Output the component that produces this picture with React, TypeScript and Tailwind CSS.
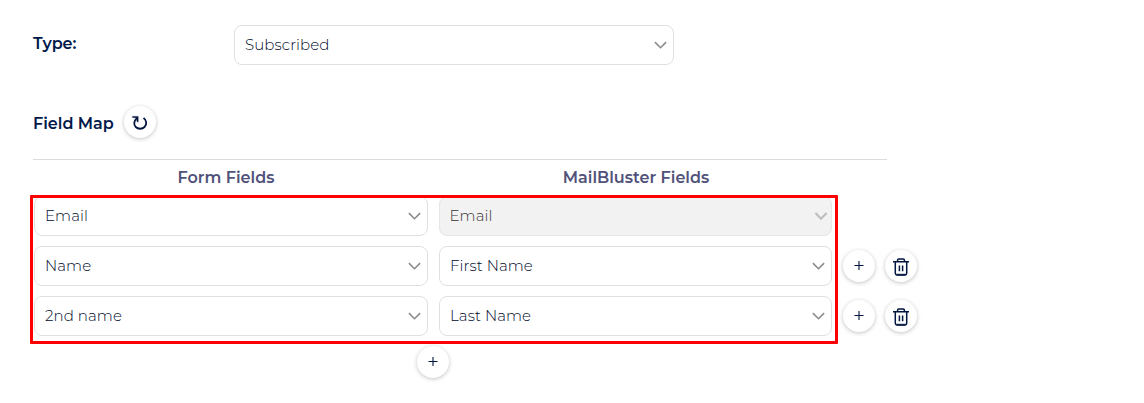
import type { ReactNode } from "react";

function Chevron({ disabled = false }: { disabled?: boolean }) {
  return (
    <svg
      className={disabled ? "mr-[3px] h-2 w-[14px] shrink-0 text-[#bdbdc0]" : "mr-[6.5px] mt-[0.5px] h-2 w-[13px] shrink-0 text-[#8b8b8b]"}
      viewBox="0 0 13 8"
      fill="none"
      stroke="currentColor"
      strokeWidth={disabled ? 2.1 : 1.6}
    >
      <path d="M.9 1.1 6.5 6.7 12.1 1.1" />
    </svg>
  );
}

function SelectBox({ label, disabled = false }: { label: string; disabled?: boolean }) {
  return (
    <div
      className={
        disabled
          ? "flex h-10 w-full items-center justify-between rounded-lg border border-[#e6e6e6] bg-[#f2f2f2] pl-[9.5px] text-[15px] font-light tracking-[0.08px] text-[#333]"
          : "flex h-10 w-full items-center justify-between rounded-lg border border-[#e0e0e0] bg-white pl-2.5 text-[15px] font-light tracking-[0.08px] text-[#00082b]"
      }
    >
      <span className="whitespace-nowrap">{label}</span>
      <Chevron disabled={disabled} />
    </div>
  );
}

function RoundButton({ label, children }: { label: string; children: ReactNode }) {
  return (
    <button
      aria-label={label}
      className="flex size-8 shrink-0 items-center justify-center rounded-full bg-white text-[#00153f] shadow-[0_1px_4px_rgba(0,0,0,0.24)]"
    >
      {children}
    </button>
  );
}

function Plus() {
  return (
    <svg className="-mt-0.5 size-[10px]" viewBox="0 0 10 10" stroke="currentColor" strokeWidth="1.1">
      <path d="M.5 5.5h9M5 1v9" />
    </svg>
  );
}

function Reload() {
  return (
    <svg className="mt-px h-4 w-4" viewBox="0 0 16 16" fill="none" stroke="currentColor">
      <path d="M4.9 3.1C2 5.7 1.3 9.4 3.7 12c2.4 2.3 6.5 2.3 8.9 0 2.6-2.8 2-6.9-1.1-9" strokeWidth="1.8" />
      <path d="M.5 1.4h5.7v5.8L4.8 6.2V3L.5 2.4Z" fill="currentColor" strokeWidth=".4" />
    </svg>
  );
}

function Trash() {
  return (
    <svg className="mt-0.5 h-[18px] w-4" viewBox="0 0 16 18" fill="none" stroke="currentColor" strokeWidth="1.5">
      <path d="M0 3.7h16M4.6 3.5V2.1Q4.6.9 5.8.9h4.4q1.2 0 1.2 1.2v1.4M2.3 4v11.3q0 1.6 1.8 1.6h7.8q1.8 0 1.8-1.6V4M6.4 7.6v5.6M9.6 7.6v5.6" />
      <path d="M3.5 16.7h9" strokeWidth="2" opacity=".7" />
    </svg>
  );
}

const rows = [
  { form: "Email", target: "Email", locked: true },
  { form: "Name", target: "First Name", locked: false },
  { form: "2nd name", target: "Last Name", locked: false },
];

export default function App() {
  return (
    <main className="h-[403px] w-[1144px] overflow-hidden bg-white pt-[25px] pl-[33px] font-['Montserrat','Inter',sans-serif] text-[#00194a]">
      <div className="flex h-10 items-center">
        <div className="w-[201px] pb-0.5 text-base leading-5 font-semibold tracking-[-0.1px]">Type:</div>
        <div className="w-[440px]"><SelectBox label="Subscribed" /></div>
      </div>

      <div className="mt-[41px] flex h-8 items-center gap-2.5">
        <h2 className="w-[81px] pt-[3px] text-base leading-5 font-semibold whitespace-nowrap">Field Map</h2>
        <RoundButton label="Refresh fields"><Reload /></RoundButton>
      </div>

      <div className="mt-[21px] w-[854px] border-t border-[#dcdcdc]">
        <div className="flex h-9 items-center text-base font-semibold text-[#505279]">
          <div className="w-[386px] text-center">Form Fields</div>
          <div className="w-[434px] text-center">MailBluster Fields</div>
        </div>
      </div>

      <section className="relative ml-px flex w-[884px] flex-col gap-2.5">
        {rows.map((row) => (
          <div key={row.form} className="flex h-10 items-center">
            <div className="w-[394px]"><SelectBox label={row.form} /></div>
            <div className="ml-[11px] w-[393px]"><SelectBox label={row.target} disabled={row.locked} /></div>
            {!row.locked && (
              <div className="ml-[11px] flex gap-2.5">
                <RoundButton label="Add field"><Plus /></RoundButton>
                <RoundButton label="Delete field"><Trash /></RoundButton>
              </div>
            )}
          </div>
        ))}
        <div className="pointer-events-none absolute -top-px -left-1 h-[149px] w-[808px] rounded-[1px] border-3 border-[#ff0000]" />
      </section>

      <div className="mt-2.5 ml-[384px]">
        <RoundButton label="Add mapping"><Plus /></RoundButton>
      </div>
    </main>
  );
}
